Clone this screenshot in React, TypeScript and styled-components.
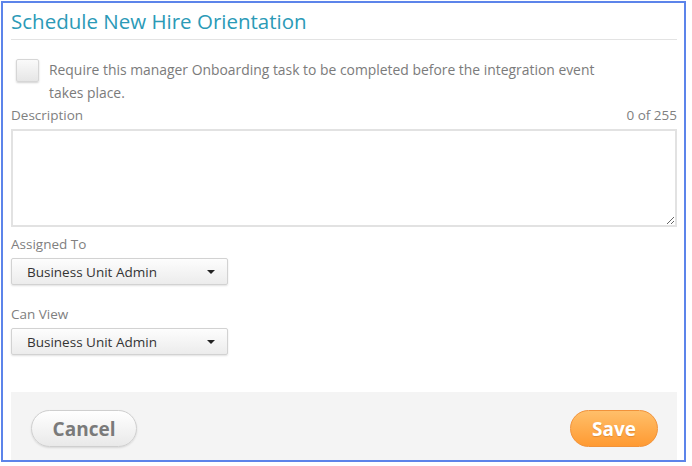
import React from "react";
import styled, { createGlobalStyle } from "styled-components";

const Global = createGlobalStyle`
  html, body { margin: 0; padding: 0; background: #fff; }
  body { font-family: "Open Sans", "Liberation Sans", sans-serif; }
  * { box-sizing: border-box; }
`;

const Frame = styled.div`
  margin: 1px 0 0 1px;
  width: 685px;
  height: 461px;
  border: 2px solid #5c84ea;
  display: flex;
  flex-direction: column;
  padding: 0 7px 0 8px;
  background: #fff;
`;

const Title = styled.h1`
  margin: 0;
  padding: 6px 0 6px 0;
  font-size: 20.5px;
  font-weight: 400;
  color: #2b9ab7;
  line-height: 24px;
  border-bottom: 1px solid #e3e3e3;
`;

const CheckRow = styled.label`
  display: flex;
  align-items: flex-start;
  gap: 10px;
  padding: 18px 0 0 5px;
`;

const Box = styled.span`
  flex: none;
  width: 23px;
  height: 23px;
  margin-top: 1px;
  border: 1px solid #d6d6d6;
  border-radius: 2px;
  background: linear-gradient(#fafafa, #e6e6e6);
  box-shadow: 0 1px 2px rgba(0, 0, 0, 0.18);
`;

const CheckText = styled.span`
  font-size: 13.9px;
  line-height: 23px;
  color: #7b7b7b;
  width: 565px;
`;

const LabelRow = styled.div<{ $top: number }>`
  display: flex;
  justify-content: space-between;
  font-size: 13.5px;
  line-height: 18px;
  color: #808080;
  margin-top: ${(p) => p.$top}px;
`;

const TextArea = styled.textarea`
  display: block;
  width: 100%;
  height: 98px;
  margin-top: 5px;
  border: 2px solid #e2e2e2;
  resize: vertical;
  font-family: inherit;
  outline: none;
`;

const Select = styled.div`
  margin-top: 5px;
  width: 217px;
  height: 27px;
  display: flex;
  align-items: center;
  justify-content: space-between;
  padding: 0 12px 0 15px;
  border: 1px solid #d2d2d2;
  border-radius: 2px;
  background: linear-gradient(#fdfdfd, #ececec);
  box-shadow: 0 1px 2px rgba(0, 0, 0, 0.12);
  font-size: 13.5px;
  color: #333;
`;

const Caret = styled.span`
  width: 0;
  height: 0;
  border-left: 4px solid transparent;
  border-right: 4px solid transparent;
  border-top: 4px solid #222;
`;

const Footer = styled.div`
  margin-top: auto;
  height: 68px;
  background: #f4f4f4;
  display: flex;
  align-items: flex-start;
  justify-content: space-between;
  padding: 18px 19px 0 20px;
`;

const Pill = styled.button<{ $primary?: boolean }>`
  height: 37px;
  border-radius: 19px;
  font-family: "Open Sans", "Liberation Sans", sans-serif;
  font-size: 19px;
  font-weight: 700;
  cursor: pointer;
  ${(p) =>
    p.$primary
      ? `
    width: 88px;
    color: #fff;
    border: 1px solid #f1923a;
    background: linear-gradient(#ffbf6a, #ff9a32);
    text-shadow: 0 1px 1px rgba(170, 90, 20, 0.35);
  `
      : `
    width: 106px;
    color: #7a7a7a;
    border: 1px solid #cfcfcf;
    background: linear-gradient(#ffffff, #e9e9e9);
    box-shadow: 0 1px 2px rgba(0,0,0,0.12);
  `}
`;

export default function App() {
  return (
    <>
      <Global />
      <Frame>
        <Title>Schedule New Hire Orientation</Title>
        <CheckRow>
          <Box />
          <CheckText>
            Require this manager Onboarding task to be completed before the integration event takes place.
          </CheckText>
        </CheckRow>
        <LabelRow $top={2}>
          <span>Description</span>
          <span>0 of 255</span>
        </LabelRow>
        <TextArea />
        <LabelRow $top={8}>
          <span>Assigned To</span>
        </LabelRow>
        <Select>
          <span>Business Unit Admin</span>
          <Caret />
        </Select>
        <LabelRow $top={20}>
          <span>Can View</span>
        </LabelRow>
        <Select>
          <span>Business Unit Admin</span>
          <Caret />
        </Select>
        <Footer>
          <Pill>Cancel</Pill>
          <Pill $primary>Save</Pill>
        </Footer>
      </Frame>
    </>
  );
}
